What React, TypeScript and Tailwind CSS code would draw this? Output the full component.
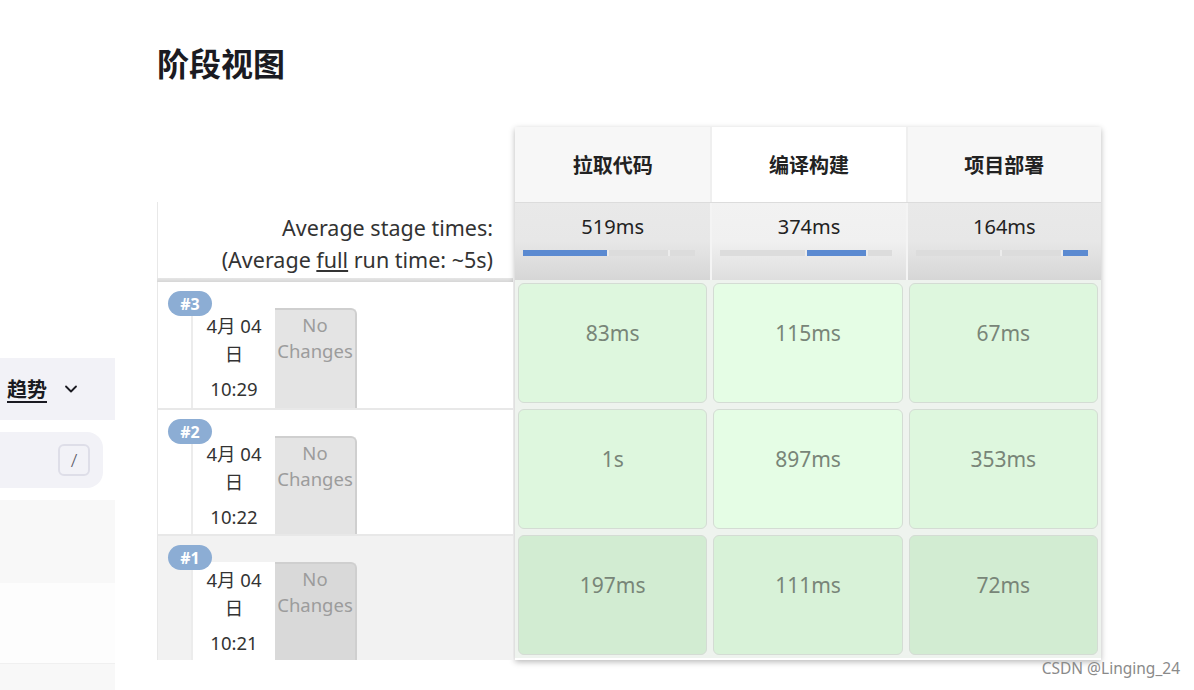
import { ChevronDown } from "lucide-react";

const font = { fontFamily: '"Noto Sans", "Noto Sans CJK SC", sans-serif' };

type Stage = { name: string; avg: string; ms: number };

const stages: Stage[] = [
  { name: "拉取代码", avg: "519ms", ms: 519 },
  { name: "编译构建", avg: "374ms", ms: 374 },
  { name: "项目部署", avg: "164ms", ms: 164 },
];

const runs = [
  { id: "#3", date: "4月 04", day: "日", time: "10:29", times: ["83ms", "115ms", "67ms"], old: false },
  { id: "#2", date: "4月 04", day: "日", time: "10:22", times: ["1s", "897ms", "353ms"], old: false },
  { id: "#1", date: "4月 04", day: "日", time: "10:21", times: ["197ms", "111ms", "72ms"], old: true },
];

const total = stages.reduce((s, st) => s + st.ms, 0);

function AvgBar({ active }: { active: number }) {
  return (
    <div className="ml-[8px] flex h-[6px] w-[172px] bg-[#dcdcdc]">
      {stages.map((st, i) => (
        <div
          key={st.name}
          className={`h-full ${i === active ? "bg-[#5b8ad1]" : "bg-[#dcdcdc]"} ${
            i > 0 ? "border-l-2 border-[#ececec]" : ""
          }`}
          style={{ width: `${(st.ms / total) * 100}%` }}
        />
      ))}
    </div>
  );
}

function Sidebar() {
  return (
    <div className="flex w-[115px] shrink-0 flex-col">
      <div className="h-[358px]" />
      <div className="flex h-[62px] items-center bg-[#f2f2f7] pl-[7px]">
        <span
          className="text-[20px] font-bold text-[#1b1b22] underline underline-offset-[4px]"
          style={{ fontFamily: '"Noto Sans CJK SC", sans-serif' }}
        >
          趋势
        </span>
        <ChevronDown className="ml-[14px] h-[20px] w-[20px] text-[#1b1b22]" strokeWidth={2.2} />
      </div>
      <div className="h-[12px]" />
      <div className="flex h-[56px] w-[103px] items-center justify-end rounded-r-[16px] bg-[#f2f2f7] pr-[13px]">
        <div className="flex h-[32px] w-[32px] items-center justify-center rounded-[6px] border-2 border-[#dedee8] text-[19px] font-light text-[#5c5c68]">
          /
        </div>
      </div>
      <div className="h-[12px]" />
      <div className="h-[83px] bg-[#f8f8f8]" />
      <div className="h-[80px] bg-[#fdfdfd]" />
      <div className="h-[27px] border-t border-[#f0f0f0] bg-[#f8f8f8]" />
    </div>
  );
}

function LeftColumn() {
  return (
    <div className="w-[356px] shrink-0">
      <div className="h-[75px]" />
      <div className="flex h-[76px] flex-col items-end justify-center border-l border-[#e8e8e8] pr-[20px] pt-[8px] text-[21.5px] leading-[32px] text-[#333]">
        <div>Average stage times:</div>
        <div>
          (Average <span className="underline">full</span> run time: ~5s)
        </div>
      </div>
      <div className="h-[4px] bg-gradient-to-b from-[#e6e6e6] to-[#d6d6d6]" />
      {runs.map((r, i) => (
        <div
          key={r.id}
          className={`relative h-[126px] border-l border-[#e8e8e8] ${i > 0 ? "border-t-2 border-t-[#e8e8e8]" : ""} ${
            r.old ? "bg-[#f2f2f2]" : "bg-white"
          }`}
        >
          <div className="absolute left-[10px] top-[9px] z-10 flex h-[25px] w-[44px] items-center justify-center rounded-full bg-[#8cadd4] text-[16px] font-bold text-white">
            {r.id}
          </div>
          <div className="flex h-full pl-[33px] pt-[26px]">
            <div className="flex w-[84px] flex-col items-center border-l-2 border-[#ececec] bg-white pt-[4px] text-[18.5px] leading-[28px] text-[#333]">
              <span>{r.date}</span>
              <span>{r.day}</span>
              <span className="mt-[7px]">{r.time}</span>
            </div>
            <div
              className={`flex w-[82px] flex-col items-center rounded-tr-[6px] border-t-2 border-r-2 border-[#cfcfcf] pt-[2px] text-[18.5px] leading-[26px] text-[#9c9c9c] ${
                r.old ? "bg-[#d9d9d9]" : "bg-[#e4e4e4]"
              }`}
            >
              <span>No</span>
              <span>Changes</span>
            </div>
          </div>
        </div>
      ))}
    </div>
  );
}

function StageTable() {
  const cellBg = (row: number, col: number) => {
    if (runs[row].old) return col === 1 ? "bg-[#d8f2d8]" : "bg-[#d2ecd2]";
    return col === 1 ? "bg-[#e5fde5]" : "bg-[#def7de]";
  };
  return (
    <div className="ml-[2px] w-[586px] shrink-0 shadow-[0_2px_6px_rgba(0,0,0,0.28)]">
      <div className="grid h-[75px] grid-cols-3">
        {stages.map((st, i) => (
          <div
            key={st.name}
            className={`flex items-center justify-center text-[20px] font-bold text-[#222] ${
              i === 1 ? "bg-white" : "bg-[#f7f7f7]"
            } ${i > 0 ? "border-l-2 border-[#efefef]" : ""}`}
            style={{ fontFamily: '"Noto Sans CJK SC", sans-serif' }}
          >
            {st.name}
          </div>
        ))}
      </div>
      <div className="grid h-[78px] grid-cols-3 border-t border-[#dcdcdc]">
        {stages.map((st, i) => (
          <div
            key={st.name}
            className={`flex flex-col pt-[10px] ${
              i === 1
                ? "bg-gradient-to-b from-[#f2f2f2] via-[#f0f0f0] to-[#dedede]"
                : "bg-gradient-to-b from-[#e9e9e9] via-[#e7e7e7] to-[#d6d6d6]"
            } ${i > 0 ? "border-l-2 border-[#f4f4f4]" : ""}`}
          >
            <div className="text-center text-[20px] leading-[28px] text-[#222]">{st.avg}</div>
            <div className="mt-[9px]">
              <AvgBar active={i} />
            </div>
          </div>
        ))}
      </div>
      {runs.map((r, ri) => (
        <div key={r.id} className="grid h-[126px] grid-cols-3 bg-[#eef3ee]">
          {r.times.map((t, ci) => (
            <div key={ci} className="p-[3px]">
              <div
                className={`h-full rounded-[6px] border border-[#d4dcd4] pt-[34px] text-center text-[21px] leading-[30px] text-[#788578] ${cellBg(
                  ri,
                  ci
                )}`}
              >
                {t}
              </div>
            </div>
          ))}
        </div>
      ))}
    </div>
  );
}

export default function App() {
  return (
    <div className="relative h-[690px] w-[1194px] overflow-hidden bg-white" style={font}>
      <div className="flex">
        <Sidebar />
        <div className="pl-[42px] pt-[42px]">
          <h1
            className="text-[32px] font-bold leading-[40px] text-[#1b1b22]"
            style={{ fontFamily: '"Noto Sans CJK SC", sans-serif' }}
          >
            阶段视图
          </h1>
          <div className="mt-[45px] flex">
            <LeftColumn />
            <StageTable />
          </div>
        </div>
      </div>
      <div className="absolute bottom-[10px] right-[14px] text-[15.5px] text-[#8a8a8a]">CSDN @Linging_24</div>
    </div>
  );
}
